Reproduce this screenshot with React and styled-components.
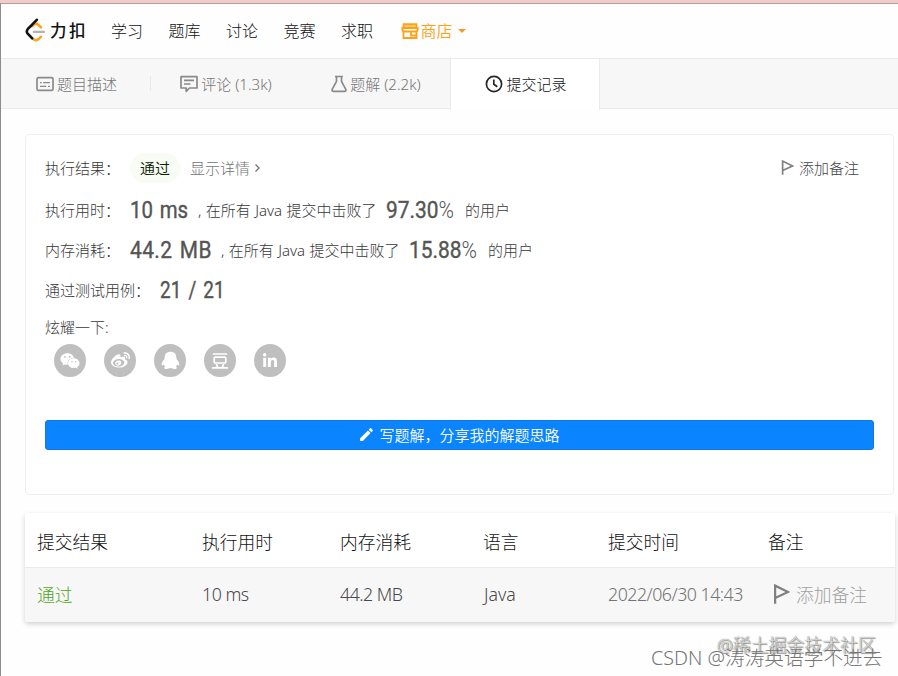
import React from 'react';
import styled, { createGlobalStyle } from 'styled-components';
import { FaWeixin, FaWeibo, FaLinkedinIn } from 'react-icons/fa';
import { MdEdit } from 'react-icons/md';

const Global = createGlobalStyle`
  * { box-sizing: border-box; }
  body { margin: 0; background: #fff; overflow: hidden; }
`;

const Page = styled.div`
  position: relative;
  width: 898px;
  height: 676px;
  overflow: hidden;
  background: #fefefe;
  border-top: 3px solid #efcdca;
  font-family: 'Noto Sans', 'Noto Sans CJK SC', sans-serif;
  font-weight: 300;
  font-size: 15px;
  color: #383838;
  white-space: nowrap;
`;

const Frame = styled.div`
  height: 673px;
  border-top: 1px solid #c09a98;
  border-left: 1px solid #8c8c8c;
`;

const Header = styled.header`
  display: flex;
  align-items: center;
  height: 54px;
  padding-left: 24px;
  font-size: 16px;
  line-height: 24px;
  color: #111;
`;

const Brand = styled.div`
  display: flex;
  align-items: center;
  width: 86px;
  gap: 4px;
  font-size: 16.5px;
  font-weight: 500;
  letter-spacing: 2.4px;
  color: #111;
`;

const Nav = styled.nav`
  display: flex;
  gap: 25.5px;
`;

const Shop = styled.span`
  display: flex;
  align-items: center;
  gap: 2px;
  margin-left: 2px;
  color: #ffa116;
  font-weight: 350;
`;

const Caret = styled.i`
  margin-left: 3px;
  border: 4px solid transparent;
  border-top-color: #ef9c2b;
  border-bottom: 0;
`;

const Tabs = styled.div`
  display: flex;
  height: 51px;
  background: #f7f7f7;
  border-top: 1px solid #ebebeb;
  border-bottom: 1px solid #ebebeb;
`;

const Tab = styled.div`
  display: flex;
  align-items: center;
  justify-content: center;
  flex: none;
  gap: 3px;
  width: ${(p) => p.$width || 150}px;
  height: ${(p) => (p.$active ? 51 : 49)}px;
  padding-bottom: ${(p) => (p.$active ? 2 : 0)}px;
  padding-left: 2px;
  font-size: 15px;
  color: ${(p) => (p.$active ? '#111' : '#757575')};
  background: ${(p) => (p.$active ? '#fff' : 'transparent')};
  border: solid #ebebeb;
  border-width: ${(p) => (p.$active ? '0 1px' : '0')};
`;

const Divider = styled.i`
  align-self: center;
  width: 1px;
  height: 15px;
  margin-right: -1px;
  background: #e9e9e9;
`;

const Card = styled.section`
  display: flex;
  flex-direction: column;
  width: 869px;
  height: 361px;
  margin: 25px 0 0 24px;
  padding: 14px 19px;
  background: #fff;
  border: 1px solid #efefef;
  border-radius: 4px;
`;

const Line = styled.div`
  display: flex;
  align-items: center;
  height: ${(p) => p.$height || 40}px;
  color: #383838;
`;

const Label = styled.span`
  width: ${(p) => p.$width || 85}px;
  font-size: 15px;
`;

const Pill = styled.span`
  display: flex;
  align-items: center;
  justify-content: center;
  width: 50px;
  height: 30px;
  border-radius: 15px;
  background: #f8fcf4;
  color: #0a2203;
  font-weight: 350;
`;

const Detail = styled.span`
  display: flex;
  align-items: center;
  gap: 4px;
  margin-left: 10px;
  color: #737373;
`;

const Note = styled.span`
  display: flex;
  align-items: center;
  gap: 5px;
  margin-left: auto;
  margin-right: 15px;
  color: #444;
`;

const Figure = styled.span`
  display: inline-block;
  width: ${(p) => p.$width}px;
  padding-top: 2px;
  font-family: Roboto, sans-serif;
  font-size: 24px;
  line-height: 30px;
  font-weight: 400;
  color: #555;
  -webkit-text-stroke: 0.4px #555;
`;

const Digits = styled.span`
  display: inline-block;
  transform: scaleX(${(p) => p.$scale || 0.88});
  transform-origin: left center;
  letter-spacing: ${(p) => p.$spacing || 0}px;
  word-spacing: ${(p) => p.$gap || 0}px;
`;

const Thin = styled.span`
  font-weight: 300;
  -webkit-text-stroke: 0;
`;

const Phrase = styled.span`
  width: ${(p) => p.$width || 'auto'};
  word-spacing: ${(p) => p.$gap || 0}px;
`;

const Shares = styled.div`
  display: flex;
  gap: 18px;
  margin: 1px 0 0 9px;
`;

const Share = styled.span`
  display: flex;
  align-items: center;
  justify-content: center;
  width: 32px;
  height: 33px;
  border-radius: 50%;
  background: #bfbfbf;
  color: #fff;
  font-size: ${(p) => p.$size || 19}px;
`;

const Write = styled.div`
  display: flex;
  align-items: center;
  justify-content: center;
  gap: 4px;
  height: 30px;
  margin-top: 43px;
  padding: 0 1px 2px 0;
  border: 1px solid #1276e0;
  border-radius: 3px;
  background: #0a84ff;
  color: #fff;
  font-weight: 350;
`;

const Table = styled.section`
  width: 870px;
  margin: 18px 0 0 24px;
  border-radius: 3px;
  background: #fff;
  box-shadow: 0 2px 5px rgba(0, 0, 0, 0.18);
  font-size: 17.75px;
`;

const Row = styled.div`
  display: grid;
  grid-template-columns: 165px 138px 143px 125px 160px 1fr;
  align-items: center;
  height: ${(p) => (p.$head ? 54 : 55)}px;
  padding-left: 12px;
  color: ${(p) => (p.$head ? '#111' : '#484848')};
  background: ${(p) => (p.$head ? '#fff' : '#f7f7f7')};
  border-top: ${(p) => (p.$head ? 0 : 1)}px solid #ebebeb;
  border-radius: ${(p) => (p.$head ? '3px 3px 0 0' : '0 0 3px 3px')};
  padding-top: ${(p) => (p.$head ? 1 : 0)}px;
  padding-bottom: ${(p) => (p.$head ? 0 : 2)}px;
`;

const Cell = styled.span`
  display: flex;
  align-items: center;
  gap: 6px;
  color: ${(p) => p.$color || 'inherit'};
  letter-spacing: ${(p) => p.$spacing || 0}px;
  padding-left: ${(p) => p.$indent || 0}px;
`;

const Watermark = styled.div`
  position: absolute;
  left: ${(p) => p.$left}px;
  top: ${(p) => p.$top}px;
  font-size: ${(p) => p.$size}px;
  line-height: 24px;
  color: ${(p) => p.$color};
  text-shadow: ${(p) => p.$shadow || 'none'};
`;

const LeetLogo = () => (
  <svg width="21" height="26" viewBox="0 0 21 26" fill="none" strokeLinecap="round">
    <path d="M7 8.3 9 6.4Q11 4.8 13.2 6.6L16 9.4" stroke="#ffa116" strokeWidth="2.5" />
    <path d="M7.3 20.3Q11 24.8 16 18.8" stroke="#ffa116" strokeWidth="2.5" />
    <path d="M8.8 13.9H19" stroke="#b3b3b3" strokeWidth="2.2" />
    <path d="M11.8 1.8 2.7 11.2Q.9 13.4 2.7 15.6L7.2 20.3" stroke="#111" strokeWidth="2.6" />
  </svg>
);

const StoreIcon = () => (
  <svg width="18" height="18" viewBox="0 0 18 18" fill="none" stroke="#ffa116" strokeWidth="1.8">
    <path d="M2.6 2.2H15.4V6H2.6Z" fill="#ffc56b" />
    <path d="M1.3 6H16.7V7.2Q16.7 9.5 14.4 9.5H3.6Q1.3 9.5 1.3 7.2ZM2.5 9.5V16H15.5V9.5M10 9.5V13.5H15" />
  </svg>
);

const CardIcon = () => (
  <svg width="18" height="16" viewBox="0 0 18 16" fill="none" stroke="#8a8a8a" strokeWidth="1.7">
    <rect x="1" y="1.6" width="16" height="12.8" rx="1.4" />
    <path d="M4 6.6H5.7M7.2 6.6H14M4 10.4H10.2M12 10.4H14" strokeWidth="1.4" />
  </svg>
);

const CommentIcon = () => (
  <svg width="18" height="18" viewBox="0 0 18 18" fill="none" stroke="#8a8a8a" strokeWidth="1.7">
    <path d="M1 1.6H17V13H9.5L6.2 16.4V13H1ZM4 5.4H14M4 9H10.5" strokeLinejoin="round" />
  </svg>
);

const FlaskIcon = () => (
  <svg width="16" height="18" viewBox="0 0 16 18" fill="none" stroke="#8a8a8a" strokeWidth="1.7">
    <path d="M4 1.5H12M5.5 1.5V6.3L1.2 14.3Q.6 16.3 2.5 16.3H13.5Q15.4 16.3 14.8 14.3L10.5 6.3V1.5" strokeLinejoin="round" />
  </svg>
);

const ClockIcon = () => (
  <svg width="18" height="18" viewBox="0 0 18 18" fill="none" stroke="#262626" strokeWidth="1.7">
    <circle cx="9" cy="9" r="7.6" />
    <path d="M8.8 4.5V9.3L12.3 11.7" />
  </svg>
);

const FlagIcon = ({ size }) => (
  <svg width={size} height={size * 1.25} viewBox="0 0 16 20" fill="none" stroke="#808080" strokeWidth="2.1">
    <path d="M2 19.5V2.5L14.2 8.5 2 14.2" />
  </svg>
);

const ChevronIcon = () => (
  <svg width="7" height="10" viewBox="0 0 7 10" fill="none" stroke="currentColor" strokeWidth="1.3">
    <path d="M1.5 1.5 5 5 1.5 8.5" />
  </svg>
);

const PenguinIcon = () => (
  <svg width="19" height="19" viewBox="0 0 18 18" fill="currentColor">
    <path d="M9 .6C5.4.6 3.4 2.8 3.5 6.3L3 8C1.4 9.6.4 11.8.7 13.5Q1.3 14.2 2.6 12.7Q3.2 14 4 14.8Q2.6 15.5 3.2 16.5Q5.5 17.6 9 16.2Q12.5 17.6 14.8 16.5Q15.4 15.5 14 14.8Q14.8 14 15.4 12.7Q16.7 14.2 17.3 13.5C17.6 11.8 16.6 9.6 15 8L14.5 6.3C14.6 2.8 12.6.6 9 .6Z" />
  </svg>
);

const DoubanIcon = () => (
  <svg width="18" height="18" viewBox="0 0 18 18" fill="none" stroke="currentColor" strokeWidth="1.7">
    <path d="M1.8 2H16.2M1 15.8H17M5.3 12 6.8 15.5M12.7 12 11.2 15.5" />
    <rect x="3.2" y="5.2" width="11.6" height="5.8" rx="1" />
  </svg>
);

const Result = ({ label, value, width, scale, spacing, gap, percent }) => (
  <Line>
    <Label>{label}</Label>
    <Figure $width={width}><Digits $scale={scale} $spacing={spacing} $gap={gap}>{value}</Digits></Figure>
    <Phrase $width="188px" $gap={0.5}>, 在所有 Java 提交中击败了</Phrase>
    <Figure $width={79}><Digits $scale={0.87}>{percent}<Thin>%</Thin></Digits></Figure>
    <Phrase>的用户</Phrase>
  </Line>
);

const NAV = ['学习', '题库', '讨论', '竞赛', '求职'];
const HEAD = ['提交结果', '执行用时', '内存消耗', '语言', '提交时间', '备注'];

export default function App() {
  return (
    <Page>
      <Global />
      <Frame>
        <Header>
          <Brand><LeetLogo />力扣</Brand>
          <Nav>
            {NAV.map((t) => <span key={t}>{t}</span>)}
            <Shop><StoreIcon />商店<Caret /></Shop>
          </Nav>
        </Header>
        <Tabs>
          <Tab $width={149}><CardIcon />题目描述</Tab>
          <Divider />
          <Tab><CommentIcon />评论 (1.3k)</Tab>
          <Tab><FlaskIcon />题解 (2.2k)</Tab>
          <Tab $active><ClockIcon />提交记录</Tab>
        </Tabs>
        <Card>
          <Line $height={37}>
            <Label>执行结果：</Label>
            <Pill>通过</Pill>
            <Detail>显示详情<ChevronIcon /></Detail>
            <Note><FlagIcon size={13} />添加备注</Note>
          </Line>
          <Line $height={3} />
          <Result label="执行用时：" value="10 ms" width={68} scale={0.85} spacing={0} gap={2} percent="97.30" />
          <Result label="内存消耗：" value="44.2 MB" width={91} scale={0.87} spacing={0.5} gap={2} percent="15.88" />
          <Line>
            <Label $width={115}>通过测试用例：</Label>
            <Figure $width={80}><Digits $scale={0.79} $gap={3}>21 / 21</Digits></Figure>
          </Line>
          <Line $height={34}><Label>炫耀一下:</Label></Line>
          <Shares>
            <Share $size={20}><FaWeixin /></Share>
            <Share $size={19}><FaWeibo /></Share>
            <Share><PenguinIcon /></Share>
            <Share><DoubanIcon /></Share>
            <Share $size={16}><FaLinkedinIn /></Share>
          </Shares>
          <Write><MdEdit size={17} />写题解，分享我的解题思路</Write>
        </Card>
        <Table>
          <Row $head>{HEAD.map((t) => <Cell key={t}>{t}</Cell>)}</Row>
          <Row>
            <Cell $color="#4fa524">通过</Cell>
            <Cell $spacing={-0.5}>10 ms</Cell>
            <Cell $spacing={-0.5}>44.2 MB</Cell>
            <Cell $indent={1}>Java</Cell>
            <Cell $color="#737373" $spacing={-0.5}>2022/06/30 14:43</Cell>
            <Cell $color="#a0a0a0" $indent={5}><FlagIcon size={17} />添加备注</Cell>
          </Row>
        </Table>
      </Frame>
      <Watermark $left={717} $top={630} $size={17.9} $color="#ddd" $shadow="0 0 1px #666, 1px 1px 1px #888">@稀土掘金技术社区</Watermark>
      <Watermark $left={651} $top={643} $size={19.7} $color="#757575">CSDN @涛涛英语学不进去</Watermark>
    </Page>
  );
}
